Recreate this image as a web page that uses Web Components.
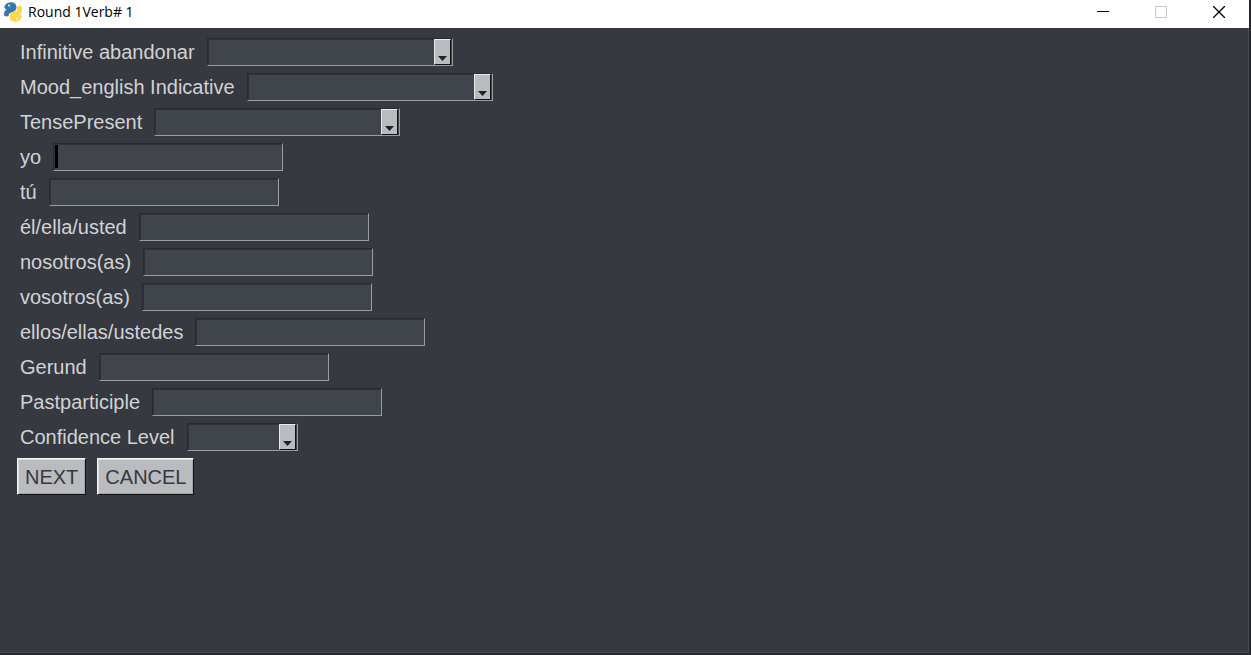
<!DOCTYPE html>
<html lang="en">
<head>
<meta charset="utf-8">
<title>Round 1Verb# 1</title>
<style>
html, body { margin: 0; height: 100%; }
body { background: #26282d; font-family: "Liberation Sans", Arial, sans-serif; }
</style>
</head>
<body>
<app-window>
  <title-bar slot="title">Round 1Verb# 1</title-bar>
  <combo-row label="Infinitive abandonar"></combo-row>
  <combo-row label="Mood_english Indicative"></combo-row>
  <combo-row label="TensePresent"></combo-row>
  <text-row label="yo" caret></text-row>
  <text-row label="tú"></text-row>
  <text-row label="él/ella/usted"></text-row>
  <text-row label="nosotros(as)"></text-row>
  <text-row label="vosotros(as)"></text-row>
  <text-row label="ellos/ellas/ustedes"></text-row>
  <text-row label="Gerund"></text-row>
  <text-row label="Pastparticiple"></text-row>
  <combo-row label="Confidence Level" short></combo-row>
  <button-row>
    <push-button>NEXT</push-button>
    <push-button>CANCEL</push-button>
  </button-row>
</app-window>
<script>
const define = (name, html, setup) => {
  const template = document.createElement('template');
  template.innerHTML = html;
  customElements.define(name, class extends HTMLElement {
    constructor() {
      super();
      this.attachShadow({ mode: 'open' }).append(template.content.cloneNode(true));
    }
    connectedCallback() { if (setup) setup(this, this.shadowRoot); }
  });
};

const setLabel = (host, root) => {
  root.querySelector('label').textContent = host.getAttribute('label');
};

const rowStyle = `
  :host { display: flex; align-items: center; gap: 12px; height: 28px; }
  label { font-size: 20px; line-height: 28px; color: #d0d3d6; white-space: nowrap; }
  input, select {
    box-sizing: border-box; margin: 0; height: 28px; padding: 0 4px;
    border: 1px solid; border-color: #292b30 #9a9ca0 #9a9ca0 #292b30;
    border-radius: 0; background: #40444b; color: #d0d3d6;
    box-shadow: inset 1px 1px #303238; font: inherit; font-size: 20px; outline: none;
  }`;

define('app-window', `
  <style>
    :host { display: flex; flex-direction: column; box-sizing: border-box; min-height: 100vh; margin-right: 2px; padding-bottom: 2px; }
    main {
      flex: 1; display: flex; flex-direction: column; gap: 7px; padding: 10px 20px;
      background: #36393f; border-right: 1px solid #494b51; border-bottom: 1px solid #494b51;
    }
  </style>
  <slot name="title"></slot>
  <main><slot></slot></main>`);

define('title-bar', `
  <style>
    :host { display: flex; align-items: center; height: 28px; background: #fff; color: #000; }
    header { flex: 1; display: flex; align-items: center; justify-content: space-between; height: 24px; padding: 0 1px 4px 3px; }
    .name { display: flex; align-items: center; gap: 5px; font: 14px/20px "Open Sans", "Noto Sans", sans-serif; }
    svg { display: block; }
    .controls { display: flex; }
    button { display: grid; place-items: center; width: 58px; height: 24px; padding: 0; border: 0; background: none; }
  </style>
  <header>
    <div class="name">
      <svg width="20" height="20" viewBox="0 0 20 20" fill="none" stroke-width="5" stroke-linecap="round" stroke-linejoin="round" aria-hidden="true">
        <path stroke="#3776ab" d="M4 5C6 2 11 2 11 5.500C11 9 3.500 7 3.500 12"/>
        <path stroke="#ffd748" d="M16 15C14 18 9 18 9 14.500C9 11 16.500 13 16.500 8V6"/>
        <circle cx="6" cy="3.500" r="1" fill="#fff"/>
        <circle cx="14" cy="16.500" r="1" fill="#fff"/>
      </svg>
      <span><slot></slot></span>
    </div>
    <div class="controls">
      <button aria-label="Minimize"><svg width="12" height="12"><path d="M0 5.500h12" stroke="#000"/></svg></button>
      <button aria-label="Maximize" disabled><svg width="12" height="12"><path d="M.5.5h11v11H.5Z" fill="none" stroke="#c8c8c8"/></svg></button>
      <button aria-label="Close"><svg width="12" height="12"><path d="m0 0 12 12M12 0 0 12" stroke="#000" stroke-width="1.300"/></svg></button>
    </div>
  </header>`);

define('text-row', `
  <style>${rowStyle}
    input { width: 230px; }
    :host([caret]) input { background: linear-gradient(#000, #000) 1px 1px / 3px 23px no-repeat #40444b; }
  </style>
  <label for="field"></label><input id="field" type="text">`, setLabel);

define('combo-row', `
  <style>${rowStyle}
    .combo { display: grid; width: 246px; }
    :host([short]) .combo { width: 111px; }
    select, .arrow { grid-area: 1 / 1; }
    select { width: 100%; appearance: none; }
    .arrow {
      justify-self: end; align-self: start; box-sizing: border-box; width: 17px; height: 26px; margin: 1px 2px 0 0;
      display: grid; place-items: end center; padding-bottom: 3px; background: #b9bbbe;
      border: 1px solid; border-color: #e8e9ea #111214 #111214 #e8e9ea; pointer-events: none;
    }
    svg { display: block; }
  </style>
  <label for="field"></label>
  <div class="combo">
    <select id="field"><option></option></select>
    <span class="arrow"><svg width="9" height="5"><path d="M0 0h9L4.500 5Z" fill="#202225"/></svg></span>
  </div>`, setLabel);

define('button-row', `
  <style>:host { display: flex; gap: 11px; margin-left: -3px; }</style>
  <slot></slot>`);

define('push-button', `
  <style>
    :host { display: block; }
    button {
      display: block; box-sizing: border-box; height: 37px; padding: 1px 7px 0; font: inherit; font-size: 20px; line-height: 34px;
      background: #b9bbbe; color: #36393f; border: 1px solid; border-color: #f4f4f5 #111214 #111214 #f4f4f5; border-radius: 0;
      box-shadow: inset 1px 1px #dcddde, inset -1px -1px #a4a6a9;
    }
  </style>
  <button type="button"><slot></slot></button>`);
</script>
</body>
</html>
